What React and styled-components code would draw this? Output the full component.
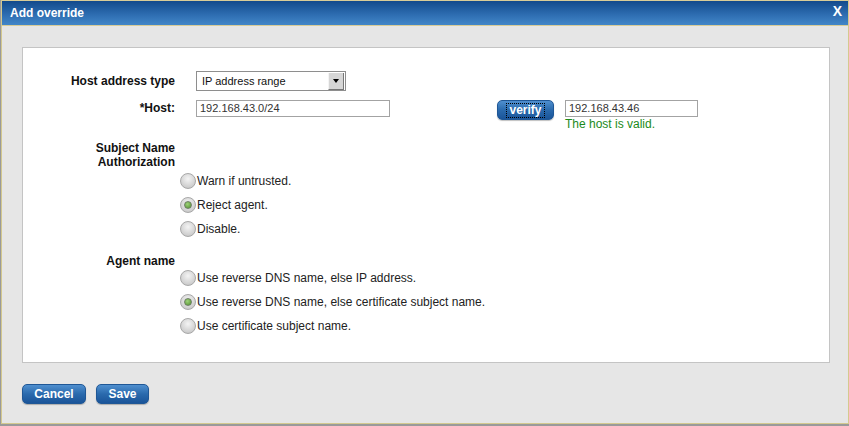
import React from "react";
import styled, { createGlobalStyle } from "styled-components";

const GlobalStyle = createGlobalStyle`
  html, body {
    margin: 0;
    padding: 0;
    background: #9a9a9a;
    font-family: "Liberation Sans", Arial, sans-serif;
  }
`;

const Dialog = styled.div`
  margin-left: 1px;
  width: 846px;
  height: 423px;
  border: 1px solid #d4c98f;
  border-top: none;
  background: #e6e6e6;
  display: flex;
  flex-direction: column;
`;

const Header = styled.div`
  height: 24px;
  border-top: 1px solid #d8cc98;
  border-bottom: 1px solid #d8cc98;
  background: linear-gradient(#124a8c, #2f6fb3 60%, #4286c8);
  display: flex;
  align-items: center;
  justify-content: space-between;
  padding: 0 6px 0 8px;
  color: #fff;
  font-weight: bold;
  font-size: 12px;
`;

const Close = styled.span`
  font-size: 14px;
  font-weight: bold;
  margin-top: -4px;
`;

const Body = styled.div`
  flex: 1;
  padding: 21px 18px 0 20px;
  display: flex;
  flex-direction: column;
`;

const Panel = styled.div`
  height: 316px;
  background: #fff;
  border: 1px solid #c4c4c4;
  padding-top: 23px;
  box-sizing: border-box;
`;

const Form = styled.div`
  display: grid;
  grid-template-columns: 152px auto;
  column-gap: 21px;
  row-gap: 9px;
  align-items: start;
  justify-content: start;
`;

const Label = styled.div`
  text-align: right;
  font-size: 12px;
  font-weight: bold;
  color: #111;
  line-height: 14px;
  margin-top: ${(p) => p.$top || 0}px;
`;

const Section = styled.div`
  width: 152px;
  margin-top: ${(p) => p.$top || 0}px;
`;

const Select = styled.div`
  width: 143px;
  height: 18px;
  border: 1px solid #8e8e8e;
  display: flex;
  align-items: center;
  font-size: 11px;
  color: #111;
  padding-left: 5px;
`;

const SelectText = styled.span`
  flex: 1;
`;

const Arrow = styled.span`
  width: 14px;
  height: 16px;
  margin-right: 1px;
  background: #d6d6d6;
  border-left: 1px solid #f4f4f4;
  border-right: 1px solid #777;
  border-bottom: 1px solid #777;
  display: flex;
  align-items: center;
  justify-content: center;
  &::after {
    content: "";
    border-left: 3px solid transparent;
    border-right: 3px solid transparent;
    border-top: 4px solid #000;
  }
`;

const HostLine = styled.div`
  display: flex;
  align-items: flex-start;
`;

const Input = styled.div`
  width: ${(p) => p.$w}px;
  height: 15px;
  border: 1px solid #a3a3a3;
  font-size: 11px;
  color: #333;
  line-height: 15px;
  padding-left: 3px;
`;

const BlueButton = styled.button`
  width: ${(p) => p.$w}px;
  height: 20px;
  border: 1px solid #1f5796;
  border-radius: 5px;
  background: linear-gradient(#4f8fcf, #2a6aad 50%, #1a5499);
  color: #fff;
  font-family: "Liberation Sans", Arial, sans-serif;
  font-weight: bold;
  font-size: 12px;
  padding: 0;
  display: flex;
  align-items: center;
  justify-content: center;
  box-shadow: 0 1px 1px rgba(0, 0, 0, 0.25);
`;

const Focused = styled.span`
  outline: 1px dotted #000;
  padding: 0 2px;
  line-height: 13px;
`;

const Verify = styled.div`
  display: flex;
  align-items: flex-start;
  margin-left: 107px;
  gap: 11px;
`;

const ValidCol = styled.div`
  display: flex;
  flex-direction: column;
`;

const Valid = styled.span`
  color: #1b8a1b;
  font-size: 12px;
  line-height: 13px;
  margin-top: 1px;
`;

const Options = styled.div`
  margin-left: 157px;
  display: flex;
  flex-direction: column;
  gap: 8px;
  margin-top: ${(p) => p.$top}px;
`;

const Option = styled.label`
  display: flex;
  align-items: center;
  height: 16px;
  font-size: 12px;
  color: #222;
`;

const Radio = styled.span`
  width: 14px;
  height: 14px;
  border-radius: 50%;
  border: 1px solid #a8a8a8;
  background: radial-gradient(circle at 50% 35%, #f4f4f4, #cfcfcf 70%, #bcbcbc);
  display: flex;
  align-items: center;
  justify-content: center;
  margin-right: 1px;
  &::after {
    content: "";
    display: ${(p) => (p.$on ? "block" : "none")};
    width: 6px;
    height: 6px;
    border-radius: 50%;
    background: radial-gradient(circle at 40% 35%, #9ed27a, #4f8f2a);
    border: 1px solid #6f7f66;
  }
`;

const Footer = styled.div`
  display: flex;
  gap: 10px;
  margin-top: 21px;
`;

function RadioGroup({ top, items, selected }) {
  return (
    <Options $top={top}>
      {items.map((t, i) => (
        <Option key={t}>
          <Radio $on={i === selected} />
          {t}
        </Option>
      ))}
    </Options>
  );
}

export default function App() {
  return (
    <>
      <GlobalStyle />
      <Dialog>
        <Header>
          <span>Add override</span>
          <Close>X</Close>
        </Header>
        <Body>
          <Panel>
            <Form>
              <Label $top={3}>Host address type</Label>
              <Select>
                <SelectText>IP address range</SelectText>
                <Arrow />
              </Select>
              <Label $top={1}>*Host:</Label>
              <HostLine>
                <Input $w={189}>192.168.43.0/24</Input>
                <Verify>
                  <BlueButton $w={57}>
                    <Focused>verify</Focused>
                  </BlueButton>
                  <ValidCol>
                    <Input $w={128}>192.168.43.46</Input>
                    <Valid>The host is valid.</Valid>
                  </ValidCol>
                </Verify>
              </HostLine>
            </Form>
            <Section $top={10}>
              <Label>
                Subject Name
                <br />
                Authorization
              </Label>
            </Section>
            <RadioGroup
              top={4}
              selected={1}
              items={["Warn if untrusted.", "Reject agent.", "Disable."]}
            />
            <Section $top={17}>
              <Label>Agent name</Label>
            </Section>
            <RadioGroup
              top={2}
              selected={1}
              items={[
                "Use reverse DNS name, else IP address.",
                "Use reverse DNS name, else certificate subject name.",
                "Use certificate subject name.",
              ]}
            />
          </Panel>
          <Footer>
            <BlueButton $w={64}>Cancel</BlueButton>
            <BlueButton $w={53}>Save</BlueButton>
          </Footer>
        </Body>
      </Dialog>
    </>
  );
}
